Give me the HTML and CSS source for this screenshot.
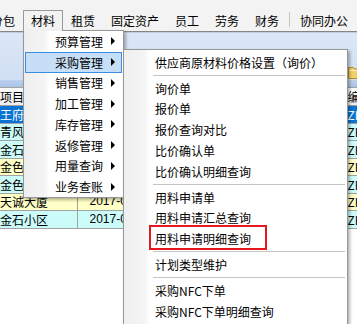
FILE: index.html
```html
<!DOCTYPE html>
<html lang="zh-CN">
<head>
<meta charset="utf-8">
<title>材料 - 采购管理</title>
<link rel="stylesheet" href="styles.css">
</head>
<body>
<div class="app">
  <nav class="menubar">
    <span class="mi first">分包</span>
    <span class="mi open">材料</span>
    <span class="mi">租赁</span>
    <span class="mi">固定资产</span>
    <span class="mi">员工</span>
    <span class="mi">劳务</span>
    <span class="mi">财务</span>
    <span class="msep"></span>
    <span class="mi">协同办公</span>
  </nav>
  <div class="toolbar">
    <svg class="folder" viewBox="0 0 16 13" width="16" height="13">
      <path d="M0.5 1.5h5l1.5 1.5h8.5v9.5h-15z" fill="#f2cf6b" stroke="#b8902e"/>
      <path d="M1 4.5h14" stroke="#fff2c0"/>
    </svg>
  </div>
  <div class="band"></div>
  <table class="grid">
    <colgroup>
      <col class="c-name"><col class="c-date"><col class="c-mid"><col class="c-code">
    </colgroup>
    <thead>
      <tr><th>项目名称</th><th class="date">日期</th><th>备注</th><th>编号</th></tr>
    </thead>
    <tbody>
      <tr class="sel"><td>王府井大街</td><td class="date">2017-06-01</td><td></td><td>ZH2017</td></tr>
      <tr class="cyan"><td>青风小区</td><td class="date">2017-06-02</td><td></td><td>ZH2017</td></tr>
      <tr class="cyan"><td>金石小区</td><td class="date">2017-06-03</td><td></td><td>ZH2017</td></tr>
      <tr class="yellow"><td>金色家园</td><td class="date">2017-06-04</td><td></td><td>ZH2017</td></tr>
      <tr class="cyan"><td>金色家园</td><td class="date">2017-06-05</td><td></td><td>ZH2017</td></tr>
      <tr class="yellow"><td>天诚大厦</td><td class="date">2017-06-06</td><td></td><td>ZH2017</td></tr>
      <tr class="cyan"><td>金石小区</td><td class="date">2017-06-07</td><td></td><td>ZH2017</td></tr>
    </tbody>
  </table>

  <div class="menu dropdown">
    <div class="item">预算管理<i class="arrow"></i></div>
    <div class="item hot">采购管理<i class="arrow"></i></div>
    <div class="item">销售管理<i class="arrow"></i></div>
    <div class="item">加工管理<i class="arrow"></i></div>
    <div class="item">库存管理<i class="arrow"></i></div>
    <div class="item">返修管理<i class="arrow"></i></div>
    <div class="item">用量查询<i class="arrow"></i></div>
    <div class="item">业务查账<i class="arrow"></i></div>
  </div>

  <div class="menu submenu">
    <div class="item">供应商原材料价格设置（询价）</div>
    <div class="sep"></div>
    <div class="item">询价单</div>
    <div class="item">报价单</div>
    <div class="item">报价查询对比</div>
    <div class="item">比价确认单</div>
    <div class="item">比价确认明细查询</div>
    <div class="sep"></div>
    <div class="item">用料申请单</div>
    <div class="item">用料申请汇总查询</div>
    <div class="item">用料申请明细查询<span class="mark"></span></div>
    <div class="sep"></div>
    <div class="item">计划类型维护</div>
    <div class="sep"></div>
    <div class="item">采购NFC下单</div>
    <div class="item">采购NFC下单明细查询</div>
  </div>
</div>
</body>
</html>
```

FILE: styles.css
```css
html, body {
  margin: 0;
  padding: 0;
  background: #ffffff;
}

body {
  font-family: "Noto Sans CJK SC", "Noto Sans", sans-serif;
  font-size: 12px;
  color: #000;
}

.app {
  position: relative;
  width: 357px;
  height: 324px;
  overflow: hidden;
  background: #ffffff;
}

/* ---------- menu bar ---------- */
.menubar {
  display: flex;
  height: 32px;
  box-sizing: border-box;
  padding-top: 10px;
  background: #f3f3f3;
  border-bottom: 1px solid #858585;
  white-space: nowrap;
}

.mi {
  flex: none;
  height: 21px;
  box-sizing: border-box;
  padding: 0 7px;
  border: 1px solid transparent;
  border-bottom: 0;
  line-height: 19px;
}

.mi.first {
  margin-left: -17px;
}

.mi.open {
  border-color: #9a9a9a;
  background: #f3f3f3;
}

.msep {
  flex: none;
  width: 1px;
  height: 15px;
  margin: 2px 2px 0;
  background: #c6c6c6;
}

/* ---------- toolbar area ---------- */
.toolbar {
  height: 48px;
  box-sizing: border-box;
  border-top: 1px solid #c4ccd8;
  padding-top: 33px;
  background: linear-gradient(#dbe7f7, #d0dff3);
}

.folder {
  display: block;
  margin-left: 348px;
}

.band {
  height: 7px;
  background: linear-gradient(#bcd0ec, #a9c3e7);
}

/* ---------- grid ---------- */
.grid {
  border-collapse: collapse;
  table-layout: fixed;
  width: 440px;
  font-size: 12px;
}

.c-name { width: 77px; }
.c-date { width: 120px; }
.c-mid  { width: 149px; }
.c-code { width: 94px; }

.grid th,
.grid td {
  padding: 0 0 0 1px;
  border: 1px solid #a2a2a2;
  white-space: nowrap;
  overflow: hidden;
  text-align: left;
  font-weight: normal;
  line-height: 15px;
}

.grid th:first-child,
.grid td:first-child {
  border-left: 0;
  padding-left: 0;
}

.grid thead tr {
  height: 18px;
  background: linear-gradient(#fbfbfb, #ededed);
}

.grid tbody tr {
  height: 17.5px;
}

.grid .date {
  padding-left: 12px;
  font-family: "Liberation Sans", sans-serif;
}

.grid tr.sel { background: #0a74d4; color: #fff; }
.grid tr.cyan { background: #ccfcfa; }
.grid tr.yellow { background: #ffffc8; }

/* ---------- popup menus ---------- */
.menu {
  position: absolute;
  box-sizing: border-box;
  border: 1px solid #979797;
  background: linear-gradient(to right, #efefef 0, #f4f4f4 20px, #fbfbfb 24px, #ffffff 25px);
  box-shadow: 2px 2px 3px rgba(0, 0, 0, 0.3);
  padding: 0 1px;
  white-space: nowrap;
}

.menu .item {
  position: relative;
  display: flex;
  align-items: center;
  box-sizing: border-box;
  padding-left: 30px;
}

.dropdown {
  left: 23px;
  top: 30px;
  width: 101px;
  height: 168px;
}

.dropdown::before {
  content: "";
  position: absolute;
  top: -1px;
  left: 0;
  width: 38px;
  height: 1px;
  background: #f1f1f1;
}

.dropdown .item {
  height: 20.75px;
  border: 1px solid transparent;
  padding-left: 29px;
}

.dropdown .item.hot {
  background: #c6def6;
  border-color: #3b8de2;
}

.arrow {
  position: absolute;
  right: 6px;
  top: 50%;
  margin-top: -4px;
  width: 0;
  height: 0;
  border-left: 4px solid #000;
  border-top: 4px solid transparent;
  border-bottom: 4px solid transparent;
}

.submenu {
  left: 123px;
  top: 49px;
  width: 225px;
  height: 300px;
  padding-top: 2px;
}

.submenu .item {
  height: 20.8px;
}

.sep {
  position: relative;
  height: 5px;
}

.sep::after {
  content: "";
  position: absolute;
  left: 28px;
  right: 1px;
  top: 2px;
  height: 1px;
  background: #c4c4c4;
}

.mark {
  position: absolute;
  left: 24px;
  top: -3px;
  width: 118px;
  height: 25px;
  box-sizing: border-box;
  border: 2px solid #e8161e;
}
```
